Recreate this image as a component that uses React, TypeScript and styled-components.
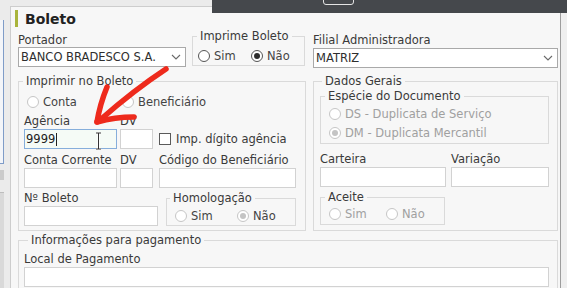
import styled, { createGlobalStyle } from "styled-components";

const GlobalStyle = createGlobalStyle`
  *, *::before, *::after { box-sizing: border-box; }
  html, body { margin: 0; height: 100%; overflow: hidden; }
  body {
    font-family: "DejaVu Sans", Verdana, sans-serif;
    font-size: 11.5px;
    color: #3a3a3a;
    background: #ebebeb;
  }
`;

const Screen = styled.div`
  position: relative;
  display: flex;
  height: 288px;
  background: #ebebeb;
`;

const SideStrip = styled.div`
  width: 10px;
  display: flex;
  flex-direction: column;
`;

const SideTree = styled.div`
  margin-top: 20px;
  width: 4px;
  height: 144px;
  background: #f3f5f9;
  border-right: 1px solid #7f9cc8;
  border-bottom: 1px solid #7f9cc8;
`;

const SideKnob = styled.div`
  margin-top: 6px;
  width: 4px;
  height: 10px;
  background: #cbcbcb;
`;

const SideFoot = styled.div`
  margin-top: 12px;
  flex: 1;
  width: 4px;
  border-top: 1px solid #bdbdbd;
  background: #d9d9d9;
`;

const RightStrip = styled.div`
  width: 6px;
  background: #efefef;
`;

const Panel = styled.div`
  flex: 1;
  margin-top: 6px;
  border: 1px solid #cdcdcd;
  border-right-color: #9d9d9d;
  border-bottom: none;
  background: #f7f7f7;
  padding: 3px 2px 0 7px;
  display: flex;
  flex-direction: column;
`;

const TitleRow = styled.div`
  display: flex;
  align-items: center;
  gap: 7px;
  height: 17px;
  margin-left: -3px;
`;

const TitleBar = styled.span`
  width: 3px;
  height: 17px;
  background: #a9b43c;
`;

const Title = styled.span`
  font-size: 14px;
  font-weight: bold;
  color: #222;
`;

const Row = styled.div<{ $gap: number; $mt?: number; $align?: string }>`
  display: flex;
  gap: ${p => p.$gap}px;
  margin-top: ${p => p.$mt ?? 0}px;
  align-items: ${p => p.$align ?? "flex-end"};
`;

const Field = styled.div<{ $w?: number; $mt?: number }>`
  display: flex;
  flex-direction: column;
  margin-top: ${p => p.$mt ?? 0}px;
  ${p => (p.$w ? `width: ${p.$w}px;` : "flex: 1;")}
`;

const Label = styled.div<{ $mb?: number }>`
  line-height: 14px;
  margin-bottom: ${p => p.$mb ?? 1}px;
  white-space: nowrap;
  color: #3a3a3a;
`;

const TextBox = styled.div<{ $focus?: boolean }>`
  position: relative;
  height: 20px;
  border: 1px solid ${p => (p.$focus ? "#86aedb" : "#d2d2d2")};
  background: ${p => (p.$focus ? "#f5fbf6" : "#fff")};
  padding-left: 1px;
  display: flex;
  align-items: center;
  color: #222;
`;

const Caret = styled.span`
  width: 1px;
  height: 13px;
  background: #222;
  margin-left: 1px;
`;

const Cursor = styled.svg`
  position: absolute;
  left: 70px;
  top: 2px;
`;

const SelectBox = styled.div`
  height: 20px;
  border: 1px solid #a9a9a9;
  background: #fff;
  padding: 0 4px 0 2px;
  display: flex;
  align-items: center;
  justify-content: space-between;
  color: #2e2e2e;
  white-space: nowrap;
`;

const Group = styled.fieldset<{ $w?: number; $pt: number; $pb: number; $pl: number; $pr?: number }>`
  margin: 0;
  min-width: 0;
  border: 1px solid #dadada;
  padding: ${p => `${p.$pt}px ${p.$pr ?? 0}px ${p.$pb}px ${p.$pl}px`};
  display: flex;
  flex-direction: column;
  ${p => (p.$w ? `width: ${p.$w}px; flex: none;` : "flex: 1;")}
`;

const Legend = styled.legend<{ $x: number }>`
  padding: 0 3px;
  margin-left: ${p => p.$x}px;
  line-height: 14px;
  color: #3a3a3a;
`;

const RadioRow = styled.div<{ $ml?: number; $mt?: number }>`
  display: flex;
  height: 14px;
  align-items: center;
  margin-left: ${p => p.$ml ?? 0}px;
  margin-top: ${p => p.$mt ?? 0}px;
`;

const RadioItem = styled.span<{ $w?: number; $muted?: boolean }>`
  display: inline-flex;
  align-items: center;
  gap: 4px;
  ${p => (p.$w ? `width: ${p.$w}px;` : "")}
  color: ${p => (p.$muted ? "#a0a0a0" : "#444")};
  white-space: nowrap;
`;

const Circle = styled.span<{ $on?: boolean; $tone: "dark" | "light" }>`
  width: 12px;
  height: 12px;
  flex: none;
  border-radius: 50%;
  border: 1px solid ${p => (p.$tone === "dark" ? "#555" : "#c6c6c6")};
  background: #fff;
  display: inline-flex;
  align-items: center;
  justify-content: center;
  &::after {
    content: "";
    width: 6px;
    height: 6px;
    border-radius: 50%;
    background: ${p => (p.$tone === "dark" ? "#2c2c2c" : "#c4c4c4")};
    display: ${p => (p.$on ? "block" : "none")};
  }
`;

const CheckLine = styled.div`
  height: 20px;
  display: flex;
  align-items: center;
  gap: 5px;
  margin-left: 3px;
  white-space: nowrap;
  color: #3a3a3a;
`;

const CheckSquare = styled.span`
  width: 12px;
  height: 12px;
  border: 1px solid #5a5a5a;
  background: #fff;
`;

const TopChrome = styled.div`
  position: absolute;
  top: 0;
  left: 212px;
  right: 0;
  height: 13px;
  background: #45484c;
  padding-left: 111px;
  overflow: hidden;
`;

const ChromePill = styled.div`
  margin-top: -4px;
  width: 31px;
  height: 9px;
  border: 1px solid #e4e4e4;
  border-radius: 3px;
`;

const ArrowLayer = styled.svg`
  position: absolute;
  left: 0;
  top: 0;
  pointer-events: none;
`;

function Chevron() {
  return (
    <svg width="10" height="6" viewBox="0 0 10 6">
      <polyline points="1,1 5,5 9,1" fill="none" stroke="#6a6a6a" strokeWidth="1.1" />
    </svg>
  );
}

function Radio({ label, on, tone = "light", muted, w }: { label: string; on?: boolean; tone?: "dark" | "light"; muted?: boolean; w?: number }) {
  return (
    <RadioItem $w={w} $muted={muted}>
      <Circle $on={on} $tone={tone} />
      {label}
    </RadioItem>
  );
}

export default function App() {
  return (
    <>
      <GlobalStyle />
      <Screen>
        <SideStrip>
          <SideTree />
          <SideKnob />
          <SideFoot />
        </SideStrip>
        <Panel>
          <TitleRow>
            <TitleBar />
            <Title>Boleto</Title>
          </TitleRow>

          <Row $gap={6} $mt={2} $align="flex-start">
            <Field $w={168} $mt={4}>
              <Label $mb={0}>Portador</Label>
              <SelectBox>BANCO BRADESCO S.A.<Chevron /></SelectBox>
            </Field>
            <Group $w={113} $pt={6} $pb={2} $pl={5}>
              <Legend $x={-1}>Imprime Boleto</Legend>
              <RadioRow>
                <Radio label="Sim" tone="dark" w={53} />
                <Radio label="Não" tone="dark" on />
              </RadioRow>
            </Group>
            <Field $mt={4} style={{ marginLeft: 2 }}>
              <Label>Filial Administradora</Label>
              <SelectBox>MATRIZ<Chevron /></SelectBox>
            </Field>
          </Row>

          <Row $gap={7} $mt={6} $align="stretch">
            <Group $w={288} $pt={7} $pb={3} $pl={5} $pr={9}>
              <Legend $x={-1}>Imprimir no Boleto</Legend>
              <RadioRow $ml={3}>
                <Radio label="Conta" w={95} />
                <Radio label="Beneficiário" />
              </RadioRow>
              <Row $gap={3} $mt={5}>
                <Field $w={93}>
                  <Label>Agência</Label>
                  <TextBox $focus>
                    9999<Caret />
                    <Cursor width="7" height="18" viewBox="0 0 7 18">
                      <path d="M1 1h5M3.5 1v16M1 17h5" stroke="#fff" strokeWidth="2.4" fill="none" />
                      <path d="M1 1h5M3.5 1v16M1 17h5" stroke="#333" strokeWidth="1" fill="none" />
                    </Cursor>
                  </TextBox>
                </Field>
                <Field $w={33}>
                  <Label>DV</Label>
                  <TextBox />
                </Field>
                <CheckLine>
                  <CheckSquare />
                  Imp. dígito agência
                </CheckLine>
              </Row>
              <Row $gap={3} $mt={4}>
                <Field $w={93}>
                  <Label>Conta Corrente</Label>
                  <TextBox />
                </Field>
                <Field $w={33}>
                  <Label>DV</Label>
                  <TextBox />
                </Field>
                <Field style={{ marginLeft: 3 }}>
                  <Label>Código do Beneficiário</Label>
                  <TextBox />
                </Field>
              </Row>
              <Row $gap={8} $mt={3}>
                <Field $w={134}>
                  <Label>Nº Boleto</Label>
                  <TextBox />
                </Field>
                <Group $w={130} $pt={4} $pb={2} $pl={8}>
                  <Legend $x={-5}>Homologação</Legend>
                  <RadioRow>
                    <Radio label="Sim" w={62} />
                    <Radio label="Não" on />
                  </RadioRow>
                </Group>
              </Row>
            </Group>

            <Group $pt={1} $pb={5} $pl={6} $pr={8}>
              <Legend $x={2}>Dados Gerais</Legend>
              <Group $pt={4} $pb={3} $pl={8}>
                <Legend $x={-4}>Espécie do Documento</Legend>
                <RadioRow>
                  <Radio label="DS - Duplicata de Serviço" muted />
                </RadioRow>
                <RadioRow $mt={5}>
                  <Radio label="DM - Duplicata Mercantil" on muted />
                </RadioRow>
              </Group>
              <Row $gap={5} $mt={8}>
                <Field $w={126}>
                  <Label>Carteira</Label>
                  <TextBox />
                </Field>
                <Field>
                  <Label>Variação</Label>
                  <TextBox />
                </Field>
              </Row>
              <Row $gap={0} $mt={3}>
                <Group $w={125} $pt={3} $pb={3} $pl={8}>
                  <Legend $x={-4}>Aceite</Legend>
                  <RadioRow>
                    <Radio label="Sim" w={57} muted />
                    <Radio label="Não" muted />
                  </RadioRow>
                </Group>
              </Row>
            </Group>
          </Row>

          <Row $gap={0} $mt={2}>
            <Group $pt={5} $pb={4} $pl={5} $pr={8}>
              <Legend $x={4}>Informações para pagamento</Legend>
              <Field>
                <Label>Local de Pagamento</Label>
                <TextBox />
              </Field>
            </Group>
          </Row>
        </Panel>
        <RightStrip />

        <TopChrome>
          <ChromePill />
        </TopChrome>

        <ArrowLayer width="567" height="288" viewBox="0 0 567 288">
          <g fill="none" stroke="#ee2a1c" strokeWidth="5.5" strokeLinecap="round" strokeLinejoin="round">
            <path d="M166 69 Q 134 90 100 120" />
            <path d="M107 87 Q 100 104 97 122" />
            <path d="M97 122 Q 115 117 134 117" />
          </g>
        </ArrowLayer>
      </Screen>
    </>
  );
}
